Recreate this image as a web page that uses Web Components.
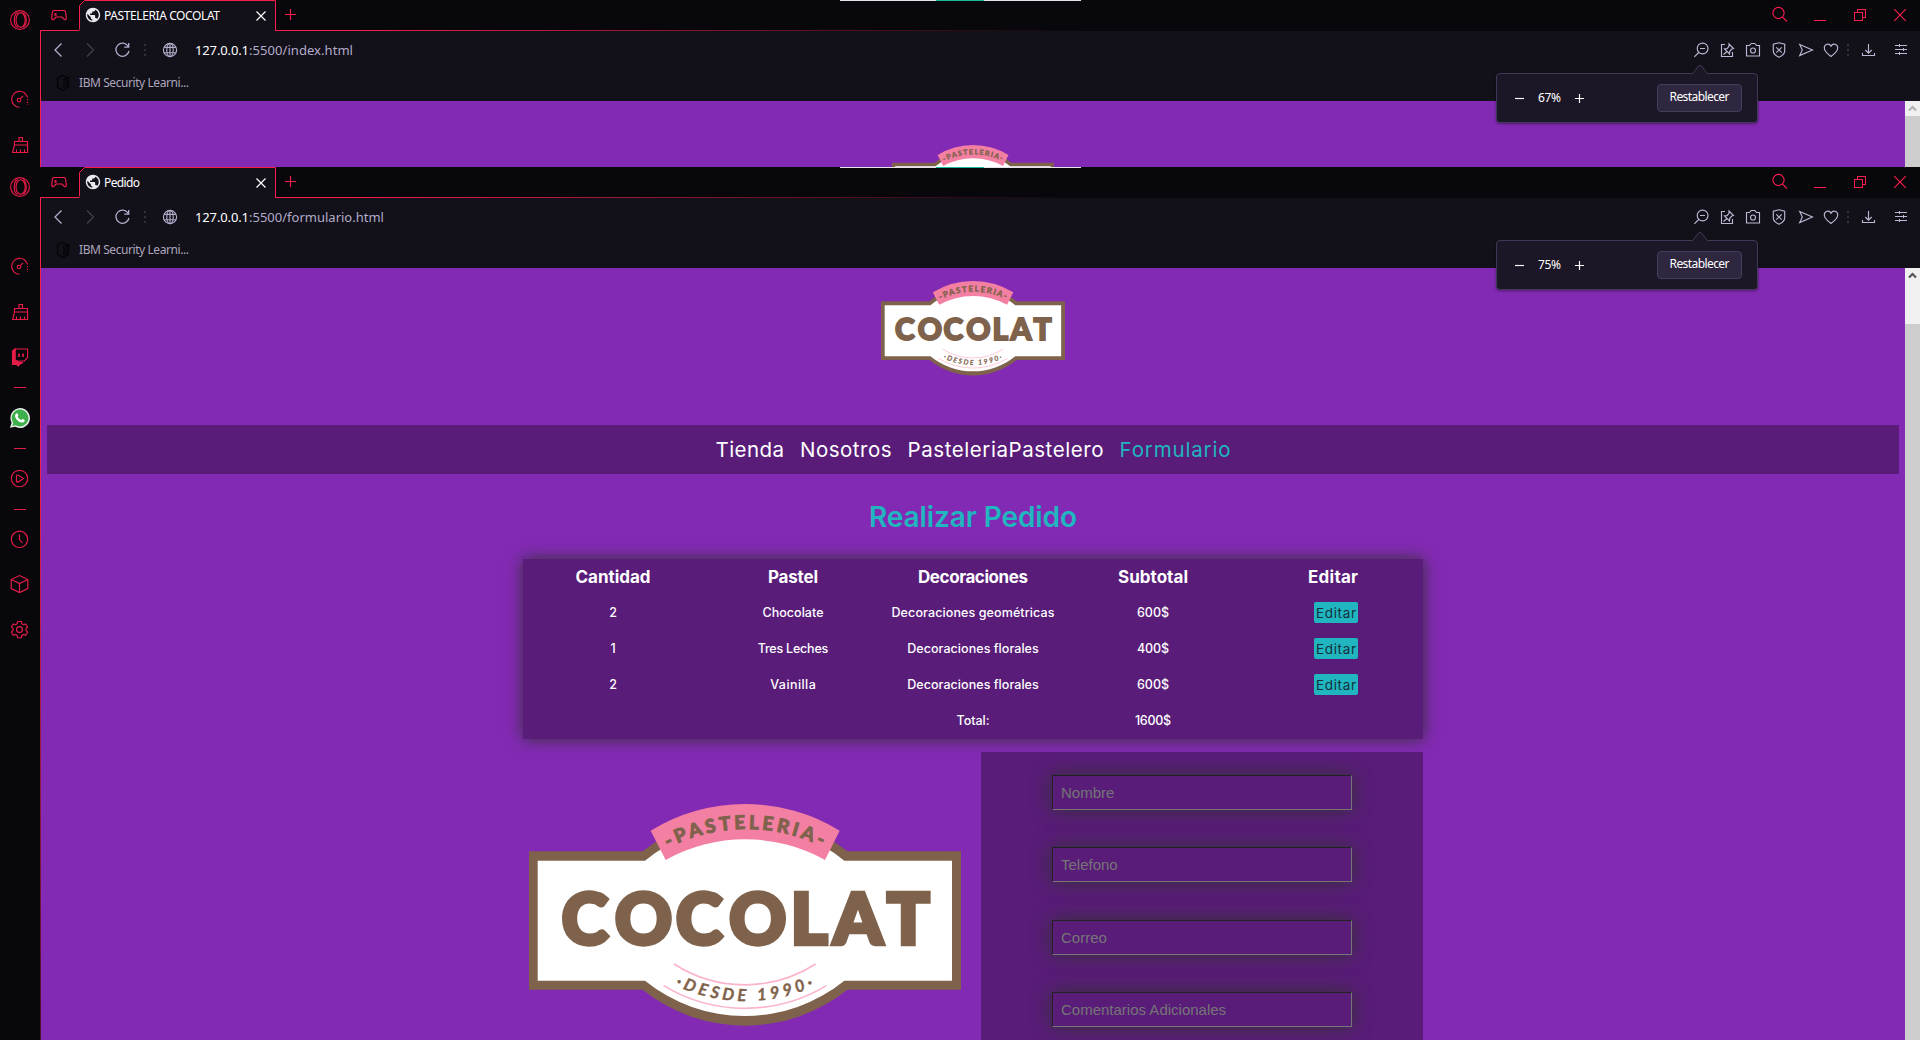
<!DOCTYPE html>
<html lang="es">
<head>
<meta charset="utf-8">
<title>Pedido</title>
<style>
  body { margin: 0; background: #08080c; font-family: "Noto Sans", "Open Sans", sans-serif; overflow: hidden; }
</style>
</head>
<body>
<app-window tab="PASTELERIA COCOLAT" tabw="116" path=":5500/index.html" pathw="104" zoom="67%" style="height:167px">
  <shop-page slot="page" compact></shop-page>
</app-window>
<app-window tab="Pedido" tabw="36" path=":5500/formulario.html" pathw="135" zoom="75%" scrolled full style="height:873px">
  <shop-page slot="page"></shop-page>
</app-window>

<script>
const define = (name, html, setup) => customElements.define(name, class extends HTMLElement {
  connectedCallback() {
    if (this.shadowRoot) return;
    const root = this.attachShadow({ mode: "open" });
    root.innerHTML = typeof html === "function" ? html(this) : html;
    if (setup) setup(this, root);
  }
});

/* ---------- icons, all on a 24x24 grid ---------- */
const ICONS = {
  opera: '<circle cx="12" cy="12" r="9.4"/><ellipse cx="12.6" cy="12" rx="4.6" ry="7.3"/><path d="M9.5 4.6C5.2 6.5 5.2 17.500 9.500 19.400M15 4.800C19.400 7.500 19.400 16.500 15 19.200"/>',
  speed: '<path d="M11.500 20.300A8 8 0 1 1 19.500 10.500"/><path d="M19.500 12v6" stroke-dasharray="1.200 1.600"/><circle cx="11" cy="13" r="1.800"/><path d="M12.300 11.700L15 9"/>',
  broom: '<path d="M11 8.500V4.500h3.500v4M6.500 8.500h13v3.500h-13zM6.500 12L4.600 19.500h15V12M8.500 19v-2.500M12.500 19v-2.500M16.500 19v-2.500"/>',
  twitch: '<path d="M7 4h12.600v8.500l-3.200 3.500H12l-2.500 2.500V16H7z"/><path d="M4.500 6L7 4v12h3l-.5 1.500h5.500l-3 1.500-1.500 2-2-1.500H4.500z" fill="currentColor"/><path d="M11 8.500v3.500M15 8.500v3.500" stroke-width="1.700"/>',
  whatsapp: '<g stroke="none"><path d="M12 2a10 10 0 1 1-4.800 18.800L2 21.800l1.600-5A10 10 0 0 1 12 2z" fill="#e9ece9"/><path d="M12 3.600a8.400 8.400 0 1 1-4.300 15.600l-3.400.9 1-3.200A8.400 8.400 0 0 1 12 3.600z" fill="#3db04b"/><path d="M8.200 7.500c.8-.7 1.300-.3 1.600.5l.6 1.500-.8 1.200c.9 1.600 2 2.600 3.700 3.300l1.100-1.200 2.300 1.200c.2 1.600-1.200 2.800-2.800 2.600C10.300 16 7 12.500 7 9.500c0-.8.500-1.500 1.200-2z" fill="#fff"/></g>',
  play: '<circle cx="11.500" cy="12.500" r="8.200"/><path d="M8.500 9.200v6.600h2l5-3.300-5-3.300z"/>',
  clock: '<circle cx="11.500" cy="12.300" r="8.200"/><path d="M11.500 7.500v5l3 3.500"/>',
  cube: '<path d="M11.500 3.600l8.300 4v9l-8.300 4-8.300-4v-9zM3.200 7.600l8.300 4 8.300-4M11.500 11.600v9"/>',
  gear: '<circle cx="11.500" cy="12.600" r="3"/><path d="M9.600 4.500h3.800l.5 2.300 1.500.9 2.300-.8 1.900 3.200-1.700 1.600v1.800l1.700 1.600-1.900 3.200-2.300-.8-1.500.9-.5 2.300H9.600l-.5-2.300-1.500-.9-2.300.8-1.900-3.200 1.700-1.600v-1.800l-1.700-1.600 1.900-3.200 2.300.8 1.500-.9z"/>',
  gamepad: '<path d="M7 7.500h10c1.200 0 1.500 1 1.700 2l.6 5.500c.2 2-1.800 2.200-2.700.8L15 14H9l-1.600 1.800c-.9 1.400-2.900 1.200-2.700-.8l.6-5.500c.2-1 .5-2 1.700-2z"/><path d="M7.500 10.500l2 2M9.500 10.500l-2 2M15.200 10h.1M16.200 12h.1M14.200 12h.1"/>',
  back: '<path d="M14.500 5.500L8 12l6.500 6.500" stroke-width="1.300"/>',
  forward: '<path d="M9 5.500l6.500 6.500L9 18.500" stroke-width="1.200"/>',
  reload: '<path d="M18.300 8.500A6.600 6.600 0 1 0 19 13M18.700 5v4.200h-4.500" stroke-width="1.300"/>',
  globe: '<circle cx="12" cy="12" r="6.600"/><ellipse cx="12" cy="12" rx="3.200" ry="6.600"/><path d="M6.200 9.300h11.600M6.200 14.700h11.600M12 5.500v13"/>',
  shield: '<path d="M12 4.800l5.700 1.500v6.700c0 2.800-2.700 4.800-5.700 6.200-3-1.400-5.700-3.400-5.700-6.200V6.300z"/><path d="M9.300 9.300l5.400 5.400M14.700 9.300l-5.400 5.400"/>',
  bookmark: '<path d="M12 4.500l5.500 2.500v9L12 19.500 6.500 16V7z"/><path d="M12 9l5-2M12 11.500l5-2M12 14l5-2M12 16.500l5-2"/>',
  favicon: '<path transform="translate(3.360 3.360) scale(.72)" stroke="none" fill="#e8eaed" d="M12 2C6.480 2 2 6.480 2 12s4.480 10 10 10 10-4.480 10-10S17.520 2 12 2zm-1 17.930c-3.950-.49-7-3.850-7-7.930 0-.62.080-1.210.210-1.790L9 15v1c0 1.100.9 2 2 2v1.930zm6.900-2.540c-.26-.81-1-1.390-1.900-1.390h-1v-3c0-.55-.45-1-1-1H8v-2h2c.55 0 1-.45 1-1V7h2c1.100 0 2-.9 2-2v-.41c2.930 1.190 5 4.060 5 7.410 0 2.080-.8 3.970-2.100 5.390z"/>',
  tabclose: '<path d="M7.500 7.500l9 9M16.500 7.500l-9 9" stroke-width="1.200"/>',
  plus: '<path d="M11.500 7v11M6 12.500h11"/>',
  search: '<circle cx="10.500" cy="12" r="5.600"/><path d="M14.600 16.200l4.300 4.300"/>',
  minimize: '<path d="M6 20.500h12" shape-rendering="crispEdges"/>',
  restore: '<path d="M6.500 12.500h8v8h-8zM9.500 12.500v-3h8v8h-3" shape-rendering="crispEdges"/>',
  close: '<path d="M6.200 9.200l11.600 11.600M17.800 9.200L6.200 20.800"/>',
  zoom: '<circle cx="13.600" cy="10.500" r="5.400"/><path d="M9.700 14.500l-4.400 4.400M11 10.500h5"/>',
  pin: '<path d="M10 6.500H6.500v12h11V14"/><path d="M14 6l4.500 4.500-1.700.5-2 2.300-.3 2.700-5-5 2.500-.4 2-2.200zM12 13.500L8.500 16.500"/>',
  camera: '<path d="M5.500 7.500h3L10.200 5.500h3.600L15.500 7.500h3v10.500h-13z"/><circle cx="12" cy="12.500" r="2.500"/>',
  send: '<path d="M5.700 6.500L18.500 12 5.700 17.500 8.300 12z"/>',
  heart: '<path d="M12 18.500C7.500 15.300 5.300 12.900 5.300 9.800c0-4 5-5 6.700-1.600 1.700-3.400 6.700-2.400 6.700 1.600 0 3.100-2.200 5.500-6.700 8.700z"/>',
  download: '<path d="M12.500 6v9M9.300 12l3.200 3.200 3.200-3.200M6.500 15v2.500h12V15"/>',
  sliders: '<path d="M6 7.500h12M6 11.500h12M6 15.500h12M10.500 5.800v3.400M14.500 9.800v3.400M10.500 13.800v3.400" shape-rendering="crispEdges"/>',
  minus: '<path d="M8 12.500h9"/>',
  add: '<path d="M8 12.500h9M12.500 8v9"/>'
};
define("line-icon", el => `<style>
  :host { display: block; flex: none; width: 24px; height: 24px; }
  svg { display: block; fill: none; stroke: currentColor; stroke-width: 1.15; }
</style><svg width="24" height="24" viewBox="0 0 24 24">${ICONS[el.getAttribute("name")]}</svg>`);

define("dot-rule", `<style>
  :host { display: flex; flex: none; flex-direction: column; align-items: center; gap: 3px; width: 8px; }
  i { width: 2px; height: 2px; background: #34313c; }
</style><i></i><i></i><i></i>`);

/* ---------- left rail ---------- */
const railItems = (full) => [
  ["opera", 8], ["speed", 55], ["broom", 22],
  ...(full ? [["twitch", 21], ["-", 18], ["whatsapp", 18], ["-", 18], ["play", 17], ["-", 19], ["clock", 17], ["cube", 21], ["gear", 21]] : [])
];
define("side-rail", el => `<style>
  :host { display: flex; flex-direction: column; align-items: center; width: 40px; background: #08080c; color: #e61c48; }
  hr { width: 12px; height: 1px; border: 0; margin: 0; background: #e61c48; flex: none; }
</style>${railItems(el.hasAttribute("full")).map(([n, m]) =>
    n === "-" ? `<hr style="margin-top:${m}px">` : `<line-icon name="${n}" style="margin-top:${m}px"></line-icon>`).join("")}`);

/* ---------- tab strip ---------- */
define("tab-strip", el => `<style>
  :host { display: flex; height: 31px; color: #fa1e4e; background: linear-gradient(90deg, #fa1e4e 0 300px, rgba(250,30,78,.4) 740px, transparent 1040px) bottom / 100% 1px no-repeat; }
  .tab { display: flex; align-items: center; width: 197px; height: 31px; color: #fff; position: relative; }
  .tab > svg { position: absolute; left: 0; top: 0; }
  .tab > * { z-index: 1; } .tab > svg { z-index: 0; }
  .label { font-size: 12px; flex: 1; white-space: nowrap; margin-left: -1px; }
  .sys { margin-left: auto; display: flex; gap: 16px; padding-right: 8px; }
</style>
<line-icon name="gamepad" style="margin:3px 8px 0 6px"></line-icon>
<div class="tab"><svg width="197" height="31"><path d="M0 31V30L.5 28V5.500L5.500 .500H196.500V31" fill="#121019"/><path d="M0 30.500L.5 28.500V5.500L5.500 .500H196.500V31" fill="none" stroke="#fa1e4e"/></svg>
<line-icon name="favicon" style="margin:0 0 1px 2px"></line-icon>
<span class="label"><fit-text w="${el.getAttribute("w")}">${el.getAttribute("label")}</fit-text></span>
<line-icon name="tabclose" style="margin-right:3px"></line-icon></div>
<line-icon name="plus" style="margin:2px 0 0 3px"></line-icon>
<div class="sys"><line-icon name="search" style="margin-top:1px"></line-icon><line-icon name="minimize"></line-icon><line-icon name="restore"></line-icon><line-icon name="close"></line-icon></div>`);

/* ---------- address bar and bookmarks ---------- */
define("address-bar", el => `<style>
  :host { display: block; height: 70px; background: #121019; color: #b3accb; }
  .row { display: flex; align-items: center; height: 38px; }
  .url { margin-left: 13px; font-size: 13px; white-space: nowrap; } b { font-weight: 400; color: #fff; }
  .tools { display: flex; align-items: center; margin-left: auto; padding-right: 7px; color: #bdb6d3; }
  .marks { display: flex; align-items: center; gap: 4px; height: 28px; padding-left: 10px; font-size: 12px; color: #aca6bd; }
</style>
<div class="row">
<line-icon name="back" style="margin-left:6px"></line-icon><line-icon name="forward" style="margin-left:7px;color:#44414f"></line-icon>
<line-icon name="reload" style="margin-left:8px"></line-icon><dot-rule style="margin-left:7px"></dot-rule><line-icon name="globe" style="margin-left:9px"></line-icon>
<span class="url"><b><fit-text w="54">127.0.0.1</fit-text></b><fit-text w="${el.getAttribute("w")}">${el.getAttribute("path")}</fit-text></span>
<div class="tools"><line-icon name="zoom"></line-icon><line-icon name="pin" style="margin-left:2px"></line-icon><line-icon name="camera" style="margin-left:2px"></line-icon>
<line-icon name="shield" style="margin-left:2px"></line-icon><line-icon name="send" style="margin-left:3px"></line-icon><line-icon name="heart" style="margin-left:1px"></line-icon>
<dot-rule style="margin-left:1px"></dot-rule><line-icon name="download" style="margin-left:4px"></line-icon><line-icon name="sliders" style="margin-left:9px"></line-icon></div>
</div>
<div class="marks"><line-icon name="bookmark" style="color:#030305"></line-icon><fit-text w="110" style="margin-bottom:2px">IBM Security Learni...</fit-text></div>`);

define("zoom-popup", `<style>
  :host { display: flex; align-items: center; box-sizing: border-box; width: 262px; height: 50px; padding: 0 15px 0 10px; background: #1c1726; border: 1px solid #443858; border-radius: 4px; color: #fff; font-size: 12px; box-shadow: 0 1px 3px rgba(0,0,0,.4); }
  .tip { position: absolute; left: 194px; top: -10px; }
  .btn { display: flex; align-items: center; justify-content: center; margin: 0 0 1px auto; padding-bottom: 2px; box-sizing: border-box; width: 85px; height: 28px; border: 1px solid #463c5e; border-radius: 4px; background: #2f2740; }
</style><svg class="tip" width="18" height="11"><path d="M1 10.500L7.500 2Q9 .500 10.500 2L17 10.500" fill="#1c1726" stroke="#443858"/><path d="M1.500 10.500h15" stroke="#1c1726" stroke-width="1.500"/></svg>
<line-icon name="minus"></line-icon><span style="margin:0 6px 2px 7px"><slot></slot></span><line-icon name="add"></line-icon>
<span class="btn"><fit-text w="60">Restablecer</fit-text></span>`);

define("scroll-bar", el => `<style>
  :host { display: flex; flex-direction: column; width: 15px; background: #f0f0f0; }
  svg { flex: none; } .thumb { flex: 1; background: #cdcdcd; margin-top: ${el.hasAttribute("scrolled") ? 41 : 0}px; }
</style><svg width="15" height="15"><path d="M4 9.500L7.500 6L11 9.500" fill="none" stroke="${el.hasAttribute("scrolled") ? "#555" : "#b4b4b4"}" stroke-width="2.200"/></svg><div class="thumb"></div>`);

define("app-window", el => {
  const a = n => el.getAttribute(n), full = el.hasAttribute("full") ? "full" : "", sc = el.hasAttribute("scrolled") ? "scrolled" : "";
  return `<style>
  :host { display: flex; position: relative; overflow: hidden; background: #08080c; }
  .edge { width: 1px; margin-top: 30px; background: linear-gradient(#fa1e4e ${full ? "30%, #4a1030 100%" : "0 100%"}); }
  .main { flex: 1; min-width: 0; display: flex; flex-direction: column; }
  .view { flex: 1; display: flex; min-height: 0; }
  ::slotted(shop-page) { flex: 1; }
  zoom-popup { position: absolute; left: 1496px; top: 73px; }
  .strip { position: absolute; left: 840px; top: 0; width: 241px; height: 1px; background: linear-gradient(90deg, #e8e3ea 96px, #1ab89c 96px 144px, #e8e3ea 144px); }
</style>
<side-rail ${full}></side-rail><div class="edge"></div>
<div class="main"><tab-strip label="${a("tab")}" w="${a("tabw")}"></tab-strip>
<address-bar path="${a("path")}" w="${a("pathw")}"></address-bar>
<div class="view"><slot name="page"></slot><scroll-bar ${sc}></scroll-bar></div></div>
<div class="strip"></div><zoom-popup><fit-text w="23">${a("zoom")}</fit-text></zoom-popup>`;
});

/* ---------- shop ---------- */
define("cocolat-logo", el => `<style>
  :host { display: block; } svg { display: block; width: 100%; overflow: visible; }
  text { fill: #7f624b; stroke: #7f624b; font-family: Lato, sans-serif; }
</style><svg viewBox="0 0 1296 665">
<path d="M0 142H341A490 490 0 0 1 955 142H1296V557H955A490 490 0 0 1 341 557H0Z" fill="#7f624b"/>
<path d="M26 170H348A475 475 0 0 1 946 170H1269V530H946A475 475 0 0 1 348 530H26Z" fill="#fff"/>
<path d="M365 80A542 542 0 0 1 932 80L888 168A491 491 0 0 0 410 168Z" fill="#f37fa2"/>
<path id="up" d="M417 132A513 513 0 0 1 887 132" fill="none"/>
<text font-size="57" font-weight="900" stroke-width="2.500"><textPath href="#up" textLength="478">-PASTELERIA-</textPath></text>
${el.hasAttribute("top-only") ? "" : `<path d="M435 480A393 393 0 0 0 860 480M404 545A472 472 0 0 0 892 545" fill="none" stroke="#fcb4cb" stroke-width="5"/>
<path id="dn" d="M438 544A497 497 0 0 0 862 544" fill="none"/>
<text font-size="211" font-weight="900" y="419" x="98 258 441 601 785 913 1074" stroke-width="13">COCOLAT</text>
<text font-size="50" font-weight="700" font-style="italic" stroke="none"><textPath href="#dn" textLength="430">·DESDE 1990·</textPath></text>`}
</svg>`);

define("order-table", () => {
  const rows = [
    [["2", 7.5], ["Chocolate", 61], ["Decoraciones geométricas", 163], ["600$", 32], "edit"],
    [["1", 5], ["Tres Leches", 70.5], ["Decoraciones florales", 131.5], ["400$", 32], "edit"],
    [["2", 7.5], ["Vainilla", 45.5], ["Decoraciones florales", 131.5], ["600$", 32], "edit"],
    [null, null, ["Total:", 33], ["1600$", 36], null]
  ];
  const cell = c => c === "edit" ? '<span class="c"><span class="e"><fit-text w="40">Editar</fit-text></span></span>'
    : `<span class="c">${c ? `<fit-text w="${c[1]}">${c[0]}</fit-text>` : ""}</span>`;
  return `<style>
  :host { display: grid; grid-template-columns: repeat(5, 180px); grid-auto-rows: 36px; width: 900px; background: #591c79; box-shadow: 0 0 15px #333; color: #fff; font-size: 12.5px; font-weight: 500; }
  .c { display: flex; align-items: center; justify-content: center; }
  .h { font-size: 17px; font-weight: 700; }
  .c > fit-text { margin-bottom: 1px; }
  .e { display: flex; align-items: center; justify-content: center; width: 44px; height: 21px; margin-left: 6px; margin-top: -1px; border-radius: 2px; background: #21b6bf; color: #12303e; font-size: 13.5px; font-weight: 400; }
</style>${[["Cantidad", 75], ["Pastel", 50], ["Decoraciones", 110], ["Subtotal", 70], ["Editar", 50]].map(c => cell(c).replace('class="c"', 'class="c h"')).join("")}${rows.flat().map(cell).join("")}`;
});

define("form-field", `<style>
  :host { display: flex; align-items: center; box-sizing: border-box; width: 300px; height: 35px; padding-left: 8px; border: 1px solid; border-color: #222 #767676 #767676 #222; background: #591c79; box-shadow: 0 0 20px #333; color: #757575; font: 15px "Liberation Sans", sans-serif; }
</style><slot></slot>`);

define("shop-page", el => el.hasAttribute("compact") ? `<style>
  :host { display: flex; justify-content: center; align-items: flex-start; background: #832ab4; overflow: hidden; }
  cocolat-logo { width: 162px; margin-top: 44px; }
</style><cocolat-logo top-only></cocolat-logo>` : `<style>
  :host { display: flex; flex-direction: column; align-items: center; background: #832ab4; overflow: hidden; font-family: Inter, Roboto, sans-serif; }
  .logo { width: 184px; height: 94px; margin-top: 12.5px; margin-bottom: .5px; flex: none; }
  nav { display: flex; justify-content: center; align-items: center; gap: 16px; align-self: stretch; height: 49px; margin: 50px 6px 0; background: #591c79; color: #fff; font-size: 20.5px; flex: none; }
  .on { color: #21b6bf; }
  h1 { margin: 0; height: 85px; flex: none; display: flex; align-items: center; color: #21b6bf; font-size: 28px; font-weight: 600; }
  .row { display: flex; justify-content: space-between; width: 900px; flex: 1; min-height: 0; margin-top: 13px; }
  .big { width: 432px; margin: 52px 0 0 5.700px; }
  form { display: flex; flex-direction: column; align-items: center; gap: 37.4px; width: 442px; padding-top: 23px; background: #591c79; overflow: hidden; }
  form-field { flex: none; }
</style>
<cocolat-logo class="logo"></cocolat-logo>
<nav><fit-text w="68.5">Tienda</fit-text><fit-text w="91.5">Nosotros</fit-text><fit-text w="196">PasteleriaPastelero</fit-text><fit-text class="on" w="111">Formulario</fit-text></nav>
<h1><fit-text w="208">Realizar Pedido</fit-text></h1>
<order-table></order-table>
<div class="row"><cocolat-logo class="big"></cocolat-logo>
<form><form-field>Nombre</form-field><form-field>Telefono</form-field><form-field>Correo</form-field><form-field>Comentarios Adicionales</form-field></form></div>`);

/* Spreads its letters so that the line takes exactly w pixels. */
define("fit-text", `<style>:host { display: inline-block; white-space: pre; }</style><slot></slot>`, (el) => {
  const n = el.textContent.length - 1, w = +el.getAttribute("w");
  if (n < 1) return;
  const s = (w - el.getBoundingClientRect().width) / n;
  el.style.letterSpacing = s + "px";
  el.style.marginRight = -s + "px";
});
</script>
</body>
</html>
